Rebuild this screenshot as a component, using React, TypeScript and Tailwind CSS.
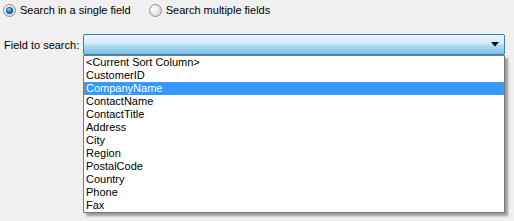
import React from "react";

const fields = [
  "<Current Sort Column>",
  "CustomerID",
  "CompanyName",
  "ContactName",
  "ContactTitle",
  "Address",
  "City",
  "Region",
  "PostalCode",
  "Country",
  "Phone",
  "Fax",
];

const Radio = ({ checked }: { checked?: boolean }) => (
  <svg width="13" height="13" viewBox="0 0 13 13">
    <defs>
      <radialGradient id={checked ? "rg-on" : "rg-off"} cx="0.35" cy="0.35" r="0.8">
        <stop offset="0" stopColor="#ffffff" />
        <stop offset="1" stopColor="#cfcfcf" />
      </radialGradient>
      <radialGradient id="dot" cx="0.4" cy="0.35" r="0.7">
        <stop offset="0" stopColor="#8fd4ff" />
        <stop offset="0.6" stopColor="#1e78c8" />
        <stop offset="1" stopColor="#0b3f7a" />
      </radialGradient>
    </defs>
    <circle cx="6.5" cy="6.5" r="6" fill={`url(#${checked ? "rg-on" : "rg-off"})`} stroke="#8e8f8f" />
    {checked && <circle cx="6.5" cy="6.5" r="3.3" fill="url(#dot)" stroke="#0c4f8a" strokeWidth="0.6" />}
  </svg>
);

export default function App() {
  return (
    <div
      className="w-[514px] h-[221px] bg-[#f0f0f0] text-[11px] text-black overflow-hidden"
      style={{ fontFamily: "Tahoma, 'Liberation Sans', sans-serif" }}
    >
      {/* search mode */}
      <div className="flex items-center pl-[3px] pt-[4px] h-[17px]">
        <label className="flex items-center gap-[4px]">
          <Radio checked />
          <span>Search in a single field</span>
        </label>
        <label className="flex items-center gap-[4px] ml-[18px]">
          <Radio />
          <span>Search multiple fields</span>
        </label>
      </div>

      {/* field picker */}
      <div className="flex items-start mt-[17px]">
        <div className="w-[83px] pl-[4px] pt-[3px]">Field to search:</div>
        <div className="relative">
          <div className="w-[422px] h-[21px] rounded-[2px] border border-[#3c7fb1] bg-[linear-gradient(#e8f5fd_0%,#d2ecfb_45%,#b0dbf4_55%,#7cc0e8_100%)] flex items-center justify-end pr-[5px]">
            <svg width="8" height="5" viewBox="0 0 8 5">
              <path d="M0 0h8L4 4.5z" fill="#000" />
            </svg>
          </div>

          {/* open dropdown list */}
          <div className="absolute left-0 top-[21px] w-[422px] bg-white border border-[#7a7a7a] shadow-[3px_3px_2px_rgba(0,0,0,0.35)]">
            {fields.map((f) => (
              <div
                key={f}
                className={`h-[13px] leading-[13px] pl-[2px] ${
                  f === "CompanyName"
                    ? "bg-[#3399ff] text-white outline outline-1 outline-dotted outline-[#c8843c] -outline-offset-1"
                    : ""
                }`}
              >
                {f}
              </div>
            ))}
          </div>
        </div>
      </div>
    </div>
  );
}
